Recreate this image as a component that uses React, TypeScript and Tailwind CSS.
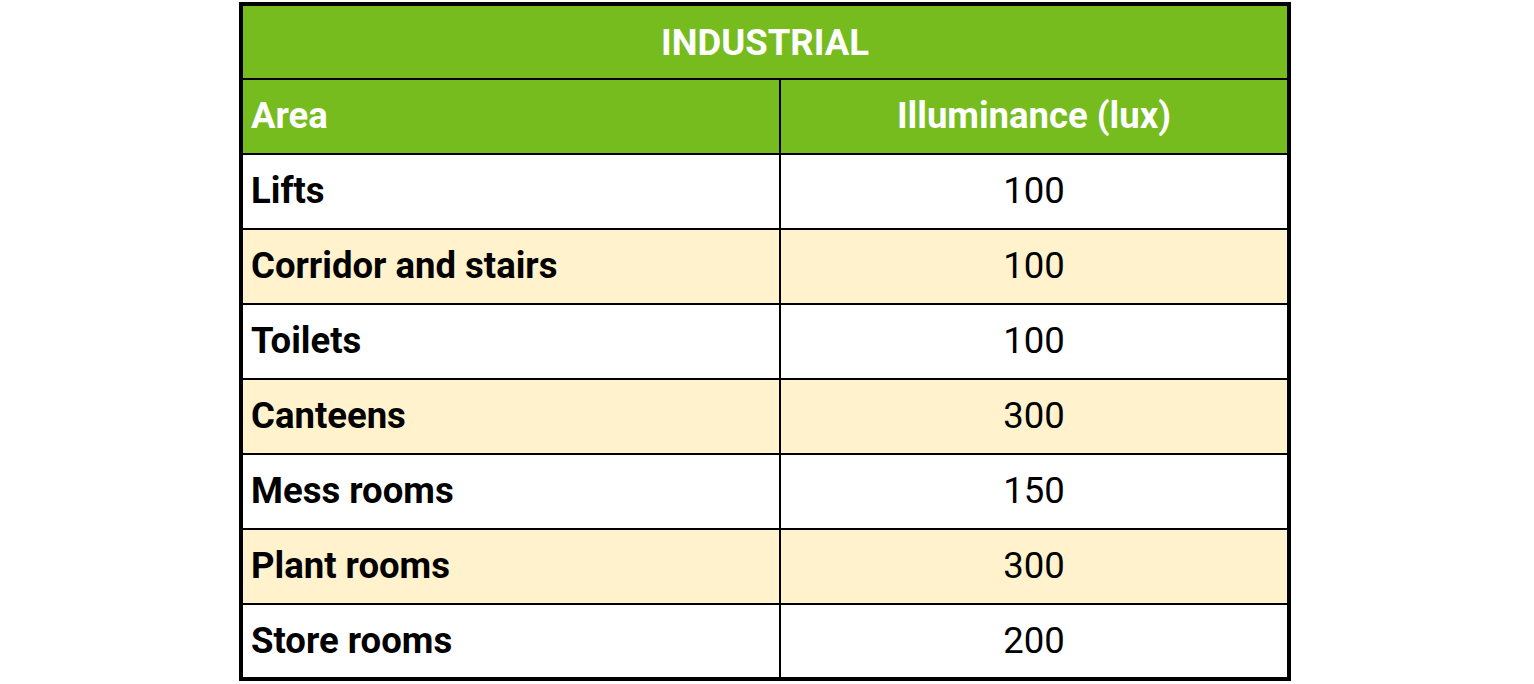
import React from "react";

const rows: [string, string][] = [
  ["Lifts", "100"],
  ["Corridor and stairs", "100"],
  ["Toilets", "100"],
  ["Canteens", "300"],
  ["Mess rooms", "150"],
  ["Plant rooms", "300"],
  ["Store rooms", "200"],
];

export default function App() {
  return (
    <div className="w-[1534px] h-[684px] bg-white pt-[2px] pl-[239px]" style={{ fontFamily: "Roboto, 'Liberation Sans', sans-serif" }}>
      <div className="w-[1052px] border-4 border-black flex flex-col">
        <div className="h-[72px] bg-[#76bc1e] flex items-center justify-center pt-[2px] text-white font-bold text-[36.5px]">
          INDUSTRIAL
        </div>
        <div className="h-[75px] border-t-2 border-black bg-[#76bc1e] flex text-white font-bold text-[36.5px]">
          <div className="w-[538px] border-r-2 border-black flex items-center pl-2">Area</div>
          <div className="flex-1 flex items-center justify-center">Illuminance (lux)</div>
        </div>
        {rows.map(([a, v], i) => (
          <div
            key={a}
            className={`${i === rows.length - 1 ? "h-[74px]" : "h-[75px]"} border-t-2 border-black flex text-black text-[36.5px] ${i % 2 === 1 ? "bg-[#fff2cc]" : "bg-white"}`}
          >
            <div className="w-[538px] border-r-2 border-black flex items-center pl-2 font-bold">{a}</div>
            <div className="flex-1 flex items-center justify-center">{v}</div>
          </div>
        ))}
      </div>
    </div>
  );
}
